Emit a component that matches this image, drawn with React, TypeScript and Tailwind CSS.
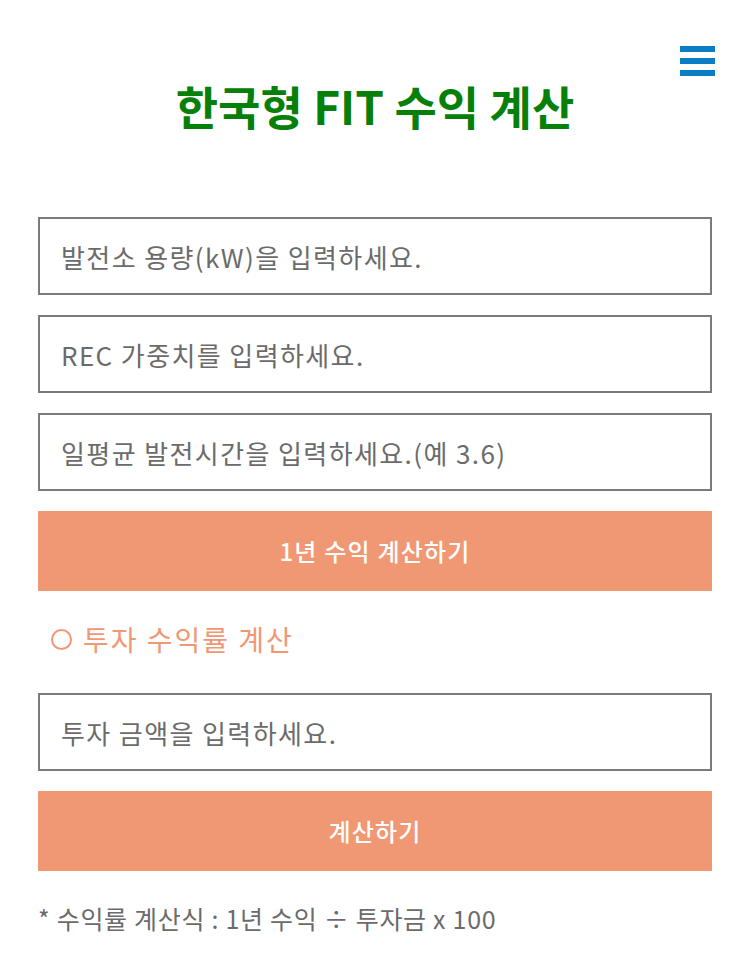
import React from "react";

const font = { fontFamily: '"Noto Sans CJK KR", "Noto Sans", sans-serif' };

function Field({ placeholder }: { placeholder: string }) {
  return (
    <input
      type="text"
      placeholder={placeholder}
      className="block w-full h-[78px] border-2 border-[#7b7b7b] bg-white px-[21px] text-[26px] tracking-[1.4px] text-[#555] placeholder:text-[#6b6b6b] outline-none"
      style={font}
    />
  );
}

function Btn({ children }: { children: React.ReactNode }) {
  return (
    <button
      className="flex w-full h-[80px] items-center justify-center bg-[#f09873] text-white text-[24px] tracking-[1.2px] font-medium"
      style={font}
    >
      {children}
    </button>
  );
}

export default function App() {
  return (
    <div className="w-[750px] min-h-[954px] bg-white relative" style={font}>
      <button className="absolute left-[680px] top-[46px] flex flex-col gap-[6px]" aria-label="menu">
        <span className="block w-[35px] h-[6px] bg-[#0a7dc4]" />
        <span className="block w-[35px] h-[6px] bg-[#0a7dc4]" />
        <span className="block w-[35px] h-[6px] bg-[#0a7dc4]" />
      </button>
      <div className="px-[38px] pt-[73px]">
        <h1 className="text-center text-[46px] font-bold text-[#07800a] leading-[64px]">
          한국형 FIT 수익 계산
        </h1>
        <div className="mt-[80px] flex flex-col gap-[20px]">
          <Field placeholder="발전소 용량(kW)을 입력하세요." />
          <Field placeholder="REC 가중치를 입력하세요." />
          <Field placeholder="일평균 발전시간을 입력하세요.(예 3.6)" />
          <Btn>1년 수익 계산하기</Btn>
        </div>
        <div className="mt-[28px] pl-[13px] flex items-center h-[40px] text-[28px] tracking-[2px] text-[#f09873]">
          <span className="inline-block w-[21px] h-[21px] rounded-full border-[2.5px] border-[#f09873] mr-[11px] mt-[1px]" />
          <span>투자 수익률 계산</span>
        </div>
        <div className="mt-[34px] flex flex-col gap-[20px]">
          <Field placeholder="투자 금액을 입력하세요." />
          <Btn>계산하기</Btn>
        </div>
        <p className="mt-[27px] text-[25px] tracking-[0.7px] text-[#6b6b6b] leading-[40px]">
          * 수익률 계산식 : 1년 수익 ÷ 투자금 x 100
        </p>
      </div>
    </div>
  );
}
